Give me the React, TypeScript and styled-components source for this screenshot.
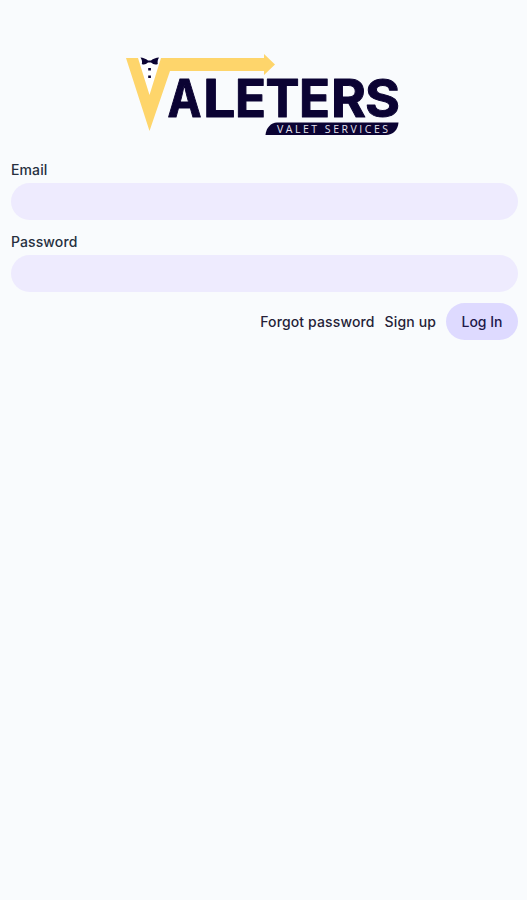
import React from "react";
import styled, { createGlobalStyle } from "styled-components";

const GlobalStyle = createGlobalStyle`
  * { box-sizing: border-box; }
  body {
    margin: 0;
    background: #f9fbfd;
    color: #27303f;
    font-family: Inter, "Liberation Sans", sans-serif;
  }
`;

const Page = styled.main`
  min-height: 100vh;
  padding: 48px 9px 0 11px;
  display: flex;
  flex-direction: column;
`;

const Logo = styled.svg`
  display: block;
  width: 280px;
  height: 92px;
  margin-left: 111px;
`;

const Form = styled.form`
  display: flex;
  flex-direction: column;
  gap: 11px;
  padding-top: 19px;
`;

const Field = styled.label`
  display: flex;
  flex-direction: column;
  gap: 2px;
  height: 61px;
`;

const Label = styled.span`
  font-size: 14px;
  font-weight: 500;
  line-height: 22px;
  letter-spacing: 0.1px;
`;

const Input = styled.input`
  width: 100%;
  height: 37px;
  padding: 0 16px;
  border: 0;
  border-radius: 19px;
  outline: none;
  background: #eeebfe;
  font: inherit;
`;

const Actions = styled.div`
  display: flex;
  align-items: center;
  justify-content: flex-end;
  gap: 10px;
`;

const TextLink = styled.a`
  padding-bottom: 1px;
  color: #261f38;
  font-size: 14px;
  font-weight: 500;
  letter-spacing: 0.13px;
  text-decoration: none;
`;

const Submit = styled.button`
  width: 72px;
  height: 37px;
  padding: 0 0 1px;
  border: 0;
  border-radius: 19px;
  background: #dedaff;
  color: #21184a;
  font: 500 14px Inter, "Liberation Sans", sans-serif;
`;

const Letter = styled.text`
  font: 700 52px Inter, sans-serif;
  fill: #0b0333;
  stroke: #0b0333;
  stroke-width: 1px;
  stroke-linejoin: round;
`;

const Tagline = styled.text`
  font: 400 10.5px "Open Sans", sans-serif;
  fill: #e6e3ef;
`;

const wordmark = [
  { char: "A", x: 167.5, width: 34 },
  { char: "L", x: 203, width: 32.5 },
  { char: "E", x: 235, width: 31 },
  { char: "T", x: 265.5, width: 34 },
  { char: "E", x: 299, width: 31 },
  { char: "R", x: 331, width: 35 },
  { char: "S", x: 365, width: 35 },
];

function ValetersLogo() {
  return (
    <Logo viewBox="122 48 280 92" role="img" aria-label="Valeters valet services">
      <path d="M138 58L149.5 95L160.5 58Z" fill="#fff" />
      <path
        d="M126 58H138L149.5 95L161 58H264V54L275 64.5L264 75V71H170L149.5 131Z"
        fill="#fed56b"
      />
      <path
        d="M140.5 57.6C143 57.6 146 59.2 148 60.4H151C153 59.2 156 57.6 159 57.6C157.6 60 157.4 62 157.8 64C155.5 65.2 153 64.4 151 62.6H148C146 64.4 144 65.2 141.8 64C142.4 62 142 60 140.5 57.6Z"
        fill="#0b0333"
      />
      <path d="M148.2 68h2.7v2.6h-2.7zM148.2 75.4h2.7V78h-2.7z" fill="#0b0333" />
      {wordmark.map(({ char, x, width }) => (
        <Letter key={x} x={x} y="117.3" textLength={width} lengthAdjust="spacingAndGlyphs">
          {char}
        </Letter>
      ))}
      <path d="M265.5 135C266 128 271 122.5 277 122.5H398.5C398 130 393 135 386 135Z" fill="#0b0333" />
      <Tagline x="277" y="132.7" textLength="111" lengthAdjust="spacing">
        VALET SERVICES
      </Tagline>
    </Logo>
  );
}

export default function App() {
  return (
    <>
      <GlobalStyle />
      <Page>
        <ValetersLogo />
        <Form>
          <Field>
            <Label>Email</Label>
            <Input type="email" />
          </Field>
          <Field>
            <Label>Password</Label>
            <Input type="password" />
          </Field>
          <Actions>
            <TextLink>Forgot password</TextLink>
            <TextLink>Sign up</TextLink>
            <Submit type="button">Log In</Submit>
          </Actions>
        </Form>
      </Page>
    </>
  );
}
